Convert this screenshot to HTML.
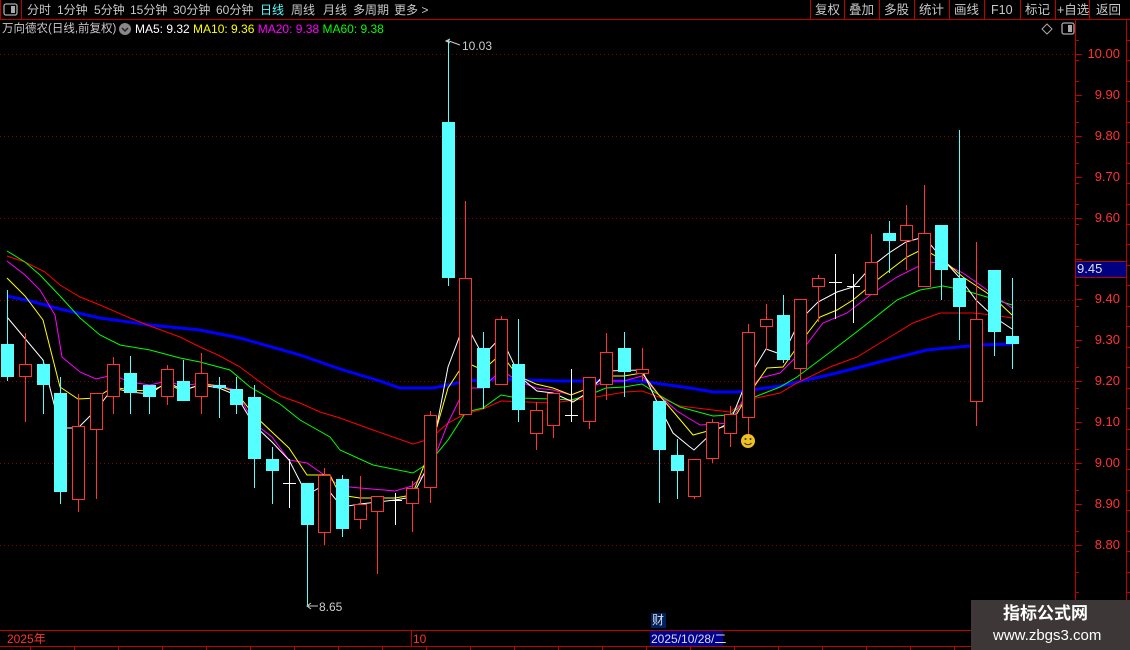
<!DOCTYPE html>
<html><head><meta charset="utf-8"><style>
html,body{margin:0;padding:0;background:#000;width:1130px;height:650px;overflow:hidden;font-family:"Liberation Sans","Noto Sans CJK SC",sans-serif}
.t{position:absolute;white-space:nowrap;font-size:12px;line-height:14px}
.n{position:absolute;white-space:nowrap;font-size:12px;line-height:14px;top:3px;color:#c8c8c8}
</style></head><body>
<div style="position:relative;width:1130px;height:650px">
<svg id="s" width="1130" height="650" style="position:absolute;left:0;top:0">
<g stroke="#8a0000" stroke-dasharray="1,3" stroke-width="1">
<line x1="0" x2="1075" y1="54.5" y2="54.5"/><line x1="0" x2="1075" y1="136.5" y2="136.5"/><line x1="0" x2="1075" y1="218.5" y2="218.5"/><line x1="0" x2="1075" y1="300.5" y2="300.5"/><line x1="0" x2="1075" y1="381.5" y2="381.5"/><line x1="0" x2="1075" y1="463.5" y2="463.5"/><line x1="0" x2="1075" y1="545.5" y2="545.5"/>
</g>
<g stroke="#c00000" stroke-width="1">
<line x1="0" x2="1130" y1="19.5" y2="19.5"/>
<line x1="1075.5" x2="1075.5" y1="20" y2="630"/>
<line x1="1126.5" x2="1126.5" y1="20" y2="600"/>
<line x1="0" x2="971" y1="630.5" y2="630.5"/>
<line x1="0" x2="971" y1="646.5" y2="646.5"/>
<line x1="411.5" x2="411.5" y1="630" y2="646"/>
<line x1="21.5" x2="21.5" y1="0" y2="19"/><line x1="0.5" x2="0.5" y1="0" y2="19"/>
<line x1="810.5" x2="810.5" y1="0" y2="19"/><line x1="844.5" x2="844.5" y1="0" y2="19"/><line x1="879.5" x2="879.5" y1="0" y2="19"/><line x1="914.5" x2="914.5" y1="0" y2="19"/><line x1="949.5" x2="949.5" y1="0" y2="19"/><line x1="984.5" x2="984.5" y1="0" y2="19"/><line x1="1020.5" x2="1020.5" y1="0" y2="19"/><line x1="1055.5" x2="1055.5" y1="0" y2="19"/><line x1="1089.5" x2="1089.5" y1="0" y2="19"/>
</g>
<g id="ticks" stroke="#c00000"></g>
<rect x="4" y="4" width="13" height="11" rx="2" fill="none" stroke="#aaa" stroke-width="1.3"/><rect x="11" y="6" width="4" height="7" fill="#aaa"/>
<rect x="1062" y="23" width="12" height="11" rx="2" fill="none" stroke="#aaa" stroke-width="1.3"/><rect x="1068" y="25" width="4" height="7" fill="#aaa"/>
<path d="M1047 24 L1052 29 L1047 34 L1042 29 Z" fill="none" stroke="#aaa"/>
<circle cx="125" cy="29" r="6" fill="#888"/><path d="M122 28 L125 31 L128 28" stroke="#222" stroke-width="1.5" fill="none"/>
<g id="ma" fill="none"></g>
<g id="cd"></g>
<circle cx="748" cy="441" r="7" fill="#f0c020"/><circle cx="745.5" cy="439" r="1" fill="#333"/><circle cx="750.5" cy="439" r="1" fill="#333"/><path d="M744.5 443 Q748 446.5 751.5 443" stroke="#333" fill="none"/>
<path d="M448 40 L448 42 M450 39 L446 41 L450 43 M449 41 L460 45" stroke="#ccc" fill="none"/>
<path d="M307 606 L318 606 M311 603 L307 606 L311 609" stroke="#ccc" fill="none"/>
<rect x="1075.5" y="261.5" width="51" height="16" fill="#000080" stroke="#c00000"/>
<rect x="650" y="631" width="73" height="15" fill="#000090"/>
<rect x="651" y="613" width="15" height="15" fill="#002060"/>
</svg>
<div class="n" style="left:27px">分时</div>
<div class="n" style="left:57px">1分钟</div>
<div class="n" style="left:94px">5分钟</div>
<div class="n" style="left:130px">15分钟</div>
<div class="n" style="left:173px">30分钟</div>
<div class="n" style="left:216px">60分钟</div>
<div class="n" style="left:260px;color:#5ff">日线</div>
<div class="n" style="left:291px">周线</div>
<div class="n" style="left:323px">月线</div>
<div class="n" style="left:353px">多周期</div>
<div class="n" style="left:394px">更多 &gt;</div>
<div class="t" style="left:815px;top:3px;color:#c8c8c8;font-size:12.5px">复权</div>
<div class="t" style="left:849px;top:3px;color:#c8c8c8;font-size:12.5px">叠加</div>
<div class="t" style="left:884px;top:3px;color:#c8c8c8;font-size:12.5px">多股</div>
<div class="t" style="left:919px;top:3px;color:#c8c8c8;font-size:12.5px">统计</div>
<div class="t" style="left:954px;top:3px;color:#c8c8c8;font-size:12.5px">画线</div>
<div class="t" style="left:991px;top:3px;color:#c8c8c8;font-size:12.5px">F10</div>
<div class="t" style="left:1025px;top:3px;color:#c8c8c8;font-size:12.5px">标记</div>
<div class="t" style="left:1057px;top:3px;color:#c8c8c8;font-size:12.5px">+自选</div>
<div class="t" style="left:1096px;top:3px;color:#c8c8c8;font-size:12.5px">返回</div>
<div class="t" style="left:2px;top:22px;color:#c8c8c8;font-size:11.5px">万向德农(日线,前复权)</div>
<div class="t" style="left:135px;top:22px;color:#fff">MA5: 9.32 <span style="color:#ff0">MA10: 9.36</span> <span style="color:#f0f">MA20: 9.38</span> <span style="color:#0f0">MA60: 9.38</span></div>
<div id="ax"></div>
<div class="t" style="left:1077px;top:262px;color:#ddd;font-size:13px">9.45</div>
<div class="t" style="left:462px;top:39px;color:#ccc">10.03</div>
<div class="t" style="left:319px;top:600px;color:#ccc">8.65</div>
<div class="t" style="left:7px;top:632px;color:#f33">2025年</div>
<div class="t" style="left:413px;top:632px;color:#f33">10</div>
<div class="t" style="left:651px;top:632px;color:#ddd">2025/10/28/二</div>
<div class="t" style="left:652px;top:613px;color:#ddd">财</div>
<div style="position:absolute;left:971px;top:600px;width:159px;height:50px;background:#3d3837"></div>
<div class="t" style="left:1003px;top:604px;color:#fff;font-size:17px;line-height:20px;font-weight:bold">指标公式网</div>
<div class="t" style="left:993px;top:627px;color:#fff;font-size:15px;line-height:18px">www.zbgs3.com</div>
</div>
<script>
var NS="http://www.w3.org/2000/svg";
function el(p,t,a){var e=document.createElementNS(NS,t);for(var k in a)e.setAttribute(k,a[k]);p.appendChild(e);return e;}
var ax=document.getElementById('ax');
var labs=["10.00","9.90","9.80","9.70","9.60","9.50","9.40","9.30","9.20","9.10","9.00","8.90","8.80"];
var tk=document.getElementById('ticks');
for(var i=0;i<labs.length;i++){var y=54+i*40.9;
 if(labs[i]!="9.50"){var d=document.createElement('div');d.className='t';d.style.cssText='left:1080px;width:40px;text-align:right;top:'+(y-8)+'px;color:#f33;font-size:13px;line-height:16px';d.textContent=labs[i];ax.appendChild(d);}
 el(tk,'line',{x1:1075,x2:1082,y1:Math.round(y)+.5,y2:Math.round(y)+.5});}
for(var y=40;y<600;y+=20.45){el(tk,'line',{x1:1075,x2:1079,y1:Math.round(y)+.5,y2:Math.round(y)+.5});el(tk,'line',{x1:1126,x2:1130,y1:Math.round(y)+.5,y2:Math.round(y)+.5});}
for(var x=30;x<971;x+=44){el(tk,'line',{x1:x+.5,x2:x+.5,y1:646,y2:650});}
var ma=document.getElementById('ma');
function pl(c,w,pts){el(ma,'polyline',{points:pts,stroke:c,'stroke-width':w});}
pl('#0000ff',3,"7,296 30,301 60,309 100,318 150,325 200,330 240,338 300,355 340,369 380,381 400,388 433,388 467,381 497,379 557,381 640,381 690,388 713,392 737,392 780,386 837,373 887,360 927,350 947,348 980,345 1013,344");
pl('#ff0000',1,"7,256 25,262 45,272 60,285 80,297 100,305 130,318 150,326 180,337 200,347 220,356 240,367 260,382 280,396 300,403 320,412 340,418 373,430 413,444 430,439 448,423 465,414 483,409 501,401 553,403 590,398 625,392 642,391 659,397 680,406 713,410 730,412 747,400 780,393 797,383 830,367 857,357 880,343 913,323 940,313 973,313 993,315 1012,318");
pl('#00ff00',1,"7,251 25,262 40,275 60,296 80,318 100,335 120,345 150,350 180,358 200,362 230,370 250,387 280,404 300,420 330,437 340,450 373,465 413,473 430,462 448,440 466,412 483,408 501,395 518,398 553,399 571,400 589,395 606,388 624,387 642,384 659,395 680,407 713,416 730,415 747,400 780,387 797,377 837,347 863,327 897,300 920,290 943,286 963,290 987,297 1012,305");
pl('#ff00ff',1,"7,261 25,275 40,290 55,315 62,357 80,372 96,379 113,375 130,382 150,385 167,381 183,386 201,383 220,386 236,390 254,423 272,437 289,460 307,463 330,479 340,486 360,488 395,491 412,486 430,469 448,423 465,388 483,388 501,370 518,381 536,388 553,390 571,395 589,388 606,381 624,381 642,376 659,395 677,411 690,419 700,425 730,423 747,393 760,378 780,373 800,353 823,323 847,313 873,293 897,277 927,262 943,263 963,273 983,287 1012,308");
pl('#ffff00',1,"7,278 25,296 43,320 60,387 78,399 96,398 113,387 130,390 150,391 167,384 183,391 201,384 219,386 236,392 254,415 272,432 289,448 307,475 330,475 340,495 360,498 395,498 412,495 430,451 448,388 465,362 483,370 501,354 518,376 536,384 553,388 571,395 589,388 606,376 624,376 642,373 659,395 677,416 693,435 730,425 747,397 767,368 783,367 800,343 820,317 837,310 853,300 877,280 907,257 923,249 943,260 963,277 993,297 1012,315");
pl('#ffffff',1,"7,317 43,360 60,428 78,428 96,410 113,388 130,392 150,394 167,382 183,390 201,385 219,388 236,395 254,425 272,442 289,460 307,495 324,485 342,507 360,504 395,500 412,497 430,462 448,367 465,322 483,356 501,337 520,377 537,391 553,393 573,402 590,391 607,371 642,370 657,402 673,433 690,447 694,450 713,432 730,422 747,380 766,349 783,355 800,320 818,302 837,292 853,287 871,267 889,253 906,242 924,237 941,257 959,277 976,300 994,317 1012,329");
var C=[[7,344,377,290,381,'c'],[25,364,377,333,422,'r'],[43,364,385,360,414,'c'],[60,393,492,377,504,'c'],[78,426,500,394,512,'r'],[96,393,430,393,499,'r'],[113,364,397,357,414,'r'],[130,373,393,356,414,'c'],[149,385,397,385,414,'c'],[167,369,397,365,405,'r'],[183,381,401,360,401,'c'],[201,373,397,353,414,'r'],[219,385,388,377,418,'c'],[236,389,405,377,414,'c'],[254,397,459,385,488,'c'],[272,459,471,447,504,'c'],[289,483,483,459,508,'w'],[307,483,525,483,605,'c'],[324,475,533,468,545,'r'],[342,479,529,475,537,'c'],
[360,504,520,476,529,'r'],[377,496,512,496,574,'r'],[395,500,500,493,525,'w'],[412,488,504,481,532,'r'],[430,415,488,411,503,'r'],[448,122,278,40,286,'c'],[465,278,415,201,415,'r'],[483,348,388,332,409,'c'],[501,319,385,316,385,'r'],[518,364,410,319,422,'c'],[536,410,434,402,450,'r'],[553,393,426,393,438,'r'],[571,415,415,369,422,'w'],[589,377,422,377,429,'r'],[606,352,385,333,400,'r'],[624,348,372,332,397,'c'],[642,369,374,348,381,'r'],[659,401,450,401,503,'c'],[677,455,471,439,499,'c'],
[694,459,497,459,499,'r'],[712,422,459,419,463,'r'],[730,414,434,406,447,'r'],[748,332,418,324,434,'r'],[766,319,327,304,350,'r'],[783,315,360,295,363,'c'],[800,299,369,299,380,'r'],[818,278,287,275,322,'r'],[835,282,282,254,319,'w'],[853,286,286,274,323,'w'],[871,262,295,234,295,'r'],[889,233,241,221,273,'c'],[906,225,241,205,270,'r'],[924,233,287,185,287,'r'],[941,225,270,225,300,'c'],[959,278,307,130,340,'c'],[976,319,402,242,426,'r'],[994,270,332,270,356,'c'],[1012,336,344,278,369,'c']];
var cd=document.getElementById('cd');
C.forEach(function(c){var x=c[0],t=c[1],b=c[2],h=c[3],l=c[4],k=c[5];
 if(k=='w'){el(cd,'line',{x1:x+.5,x2:x+.5,y1:h,y2:l,stroke:'#fff'});el(cd,'line',{x1:x-6,x2:x+7,y1:t+.5,y2:t+.5,stroke:'#fff'});return;}
 var col=k=='c'?'#55ffff':'#ff3333';
 el(cd,'line',{x1:x+.5,x2:x+.5,y1:h,y2:l,stroke:col});
 if(k=='c')el(cd,'rect',{x:x-6,y:t,width:13,height:Math.max(b-t,1),fill:col});
 else el(cd,'rect',{x:x-5.5,y:t+.5,width:12,height:Math.max(b-t-1,1),fill:'#000',stroke:col});});
</script>
</body></html>
